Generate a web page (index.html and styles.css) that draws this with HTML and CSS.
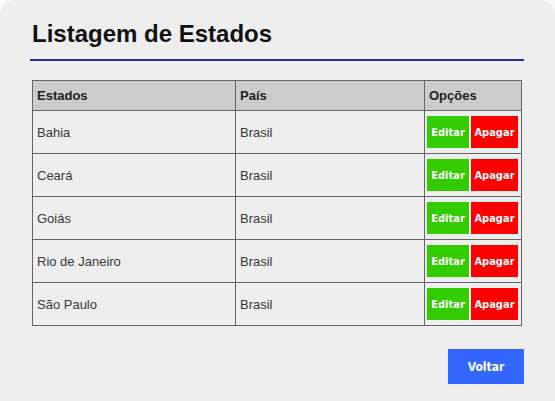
FILE: index.html
```html
<!DOCTYPE html>
<html lang="pt">
<head>
<meta charset="utf-8">
<title>Listagem de Estados</title>
<link rel="stylesheet" href="styles.css">
</head>
<body>
<div class="card">
  <h1 class="title">Listagem de Estados</h1>
  <div class="rule"></div>
  <table class="grid">
    <thead>
      <tr><th class="c1">Estados</th><th class="c2">País</th><th class="c3">Opções</th></tr>
    </thead>
    <tbody>
      <tr><td>Bahia</td><td>Brasil</td><td class="opts"><span class="btn edit">Editar</span><span class="btn del">Apagar</span></td></tr>
      <tr><td>Ceará</td><td>Brasil</td><td class="opts"><span class="btn edit">Editar</span><span class="btn del">Apagar</span></td></tr>
      <tr><td>Goiás</td><td>Brasil</td><td class="opts"><span class="btn edit">Editar</span><span class="btn del">Apagar</span></td></tr>
      <tr><td>Rio de Janeiro</td><td>Brasil</td><td class="opts"><span class="btn edit">Editar</span><span class="btn del">Apagar</span></td></tr>
      <tr><td>São Paulo</td><td>Brasil</td><td class="opts"><span class="btn edit">Editar</span><span class="btn del">Apagar</span></td></tr>
    </tbody>
  </table>
  <div class="actions"><span class="back">Voltar</span></div>
</div>
</body>
</html>
```
FILE: styles.css
```css
html, body {
  margin: 0;
  padding: 0;
  background: #f9f9f9;
  font-family: "Liberation Sans", Arial, sans-serif;
}
.card {
  background: #eeeeee;
  border-radius: 15px 15px 0 0;
  height: 401px;
  box-sizing: border-box;
  padding: 20px 31px 0 30px;
}
.title {
  margin: 0 0 0 2px;
  font-size: 24px;
  line-height: 28px;
  font-weight: bold;
  color: #111;
}
.rule {
  height: 2px;
  background: #1f3382;
  margin-top: 11px;
}
.grid {
  margin: 19px 2px 0 2px;
  width: 490px;
  border-collapse: collapse;
  font-size: 13px;
  color: #383838;
}
.grid th, .grid td {
  border: 1px solid #666;
  text-align: left;
  padding: 0 4px;
}
.grid th {
  background: #cccccc;
  height: 29px;
  font-weight: bold;
  color: #222;
}
.grid td {
  height: 42px;
}
.c1 { width: 194px; }
.c2 { width: 180px; }
.grid td.opts {
  padding: 0 2px;
  white-space: nowrap;
}
.btn {
  display: inline-block;
  height: 32px;
  line-height: 34px;
  color: #fff;
  font-family: "DejaVu Sans Condensed", "DejaVu Sans", sans-serif;
  font-weight: bold;
  font-size: 11px;
  text-align: center;
  vertical-align: middle;
}
.edit { background: #33cc00; width: 42px; margin-right: 2px; }
.del { background: #ff0000; width: 47px; }
.actions {
  display: flex;
  justify-content: flex-end;
  margin-top: 23px;
}
.back {
  display: inline-block;
  background: #3366ff;
  color: #fff;
  width: 76px;
  height: 35px;
  line-height: 36px;
  text-align: center;
  font-family: "DejaVu Sans Condensed", "DejaVu Sans", sans-serif;
  font-weight: bold;
  font-size: 12px;
}
```
